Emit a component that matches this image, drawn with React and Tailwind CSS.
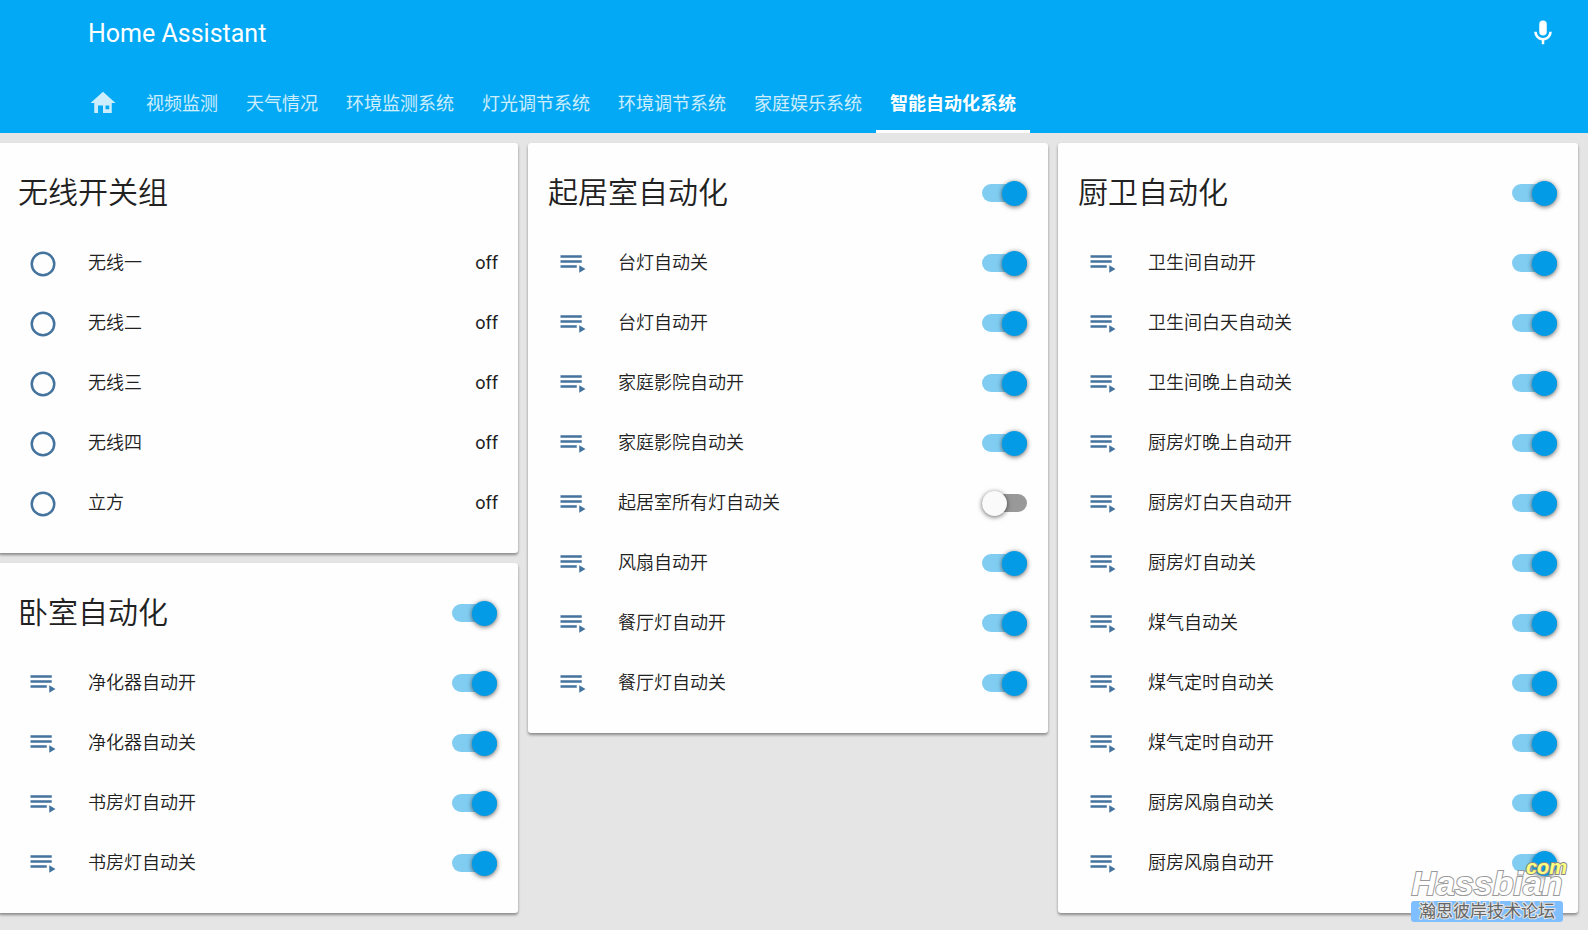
import React, { useState } from 'react';

const tabs = [
  '视频监测',
  '天气情况',
  '环境监测系统',
  '灯光调节系统',
  '环境调节系统',
  '家庭娱乐系统',
  '智能自动化系统',
];

const columns = [
  [
    {
      title: '无线开关组',
      sensors: ['无线一', '无线二', '无线三', '无线四', '立方'],
    },
    {
      title: '卧室自动化',
      automations: ['净化器自动开', '净化器自动关', '书房灯自动开', '书房灯自动关'],
    },
  ],
  [
    {
      title: '起居室自动化',
      automations: [
        '台灯自动关',
        '台灯自动开',
        '家庭影院自动开',
        '家庭影院自动关',
        '起居室所有灯自动关',
        '风扇自动开',
        '餐厅灯自动开',
        '餐厅灯自动关',
      ],
      off: ['起居室所有灯自动关'],
    },
  ],
  [
    {
      title: '厨卫自动化',
      automations: [
        '卫生间自动开',
        '卫生间白天自动关',
        '卫生间晚上自动关',
        '厨房灯晚上自动开',
        '厨房灯白天自动开',
        '厨房灯自动关',
        '煤气自动关',
        '煤气定时自动关',
        '煤气定时自动开',
        '厨房风扇自动关',
        '厨房风扇自动开',
      ],
    },
  ],
];

const Icon = ({ d }) => (
  <svg viewBox="0 0 24 24" className="size-[30px] shrink-0 fill-current" aria-hidden="true">
    <path d={d} />
  </svg>
);

const icons = {
  home: 'M12,3L2,12H5V20H8V14H12V20H19V12H22L12,3M14,14H17V17H14V14Z',
  mic: 'M12,2A3,3 0 0,1 15,5V11A3,3 0 0,1 12,14A3,3 0 0,1 9,11V5A3,3 0 0,1 12,2M19,11C19,14.53 16.39,17.44 13,17.93V21H11V17.93C7.61,17.44 5,14.53 5,11H7A5,5 0 0,0 12,16A5,5 0 0,0 17,11H19Z',
  circle:
    'M12,20A8,8 0 0,1 4,12A8,8 0 0,1 12,4A8,8 0 0,1 20,12A8,8 0 0,1 12,20M12,2A10,10 0 0,0 2,12A10,10 0 0,0 12,22A10,10 0 0,0 22,12A10,10 0 0,0 12,2Z',
  playlist: 'M19,9H2V11H19V9M19,5H2V7H19V5M2,15H15V13H2V15M17,13V19L22,16L17,13Z',
};

const Toggle = ({ id, label, checked, onChange }) => (
  <span className="relative mr-px flex h-[25px] w-[45px] shrink-0 items-center">
    <input
      type="checkbox"
      id={id}
      aria-label={label}
      checked={checked}
      onChange={onChange}
      className="peer h-[18px] w-full cursor-pointer appearance-none rounded-full bg-[#999999] checked:bg-[#81cdf2]"
    />
    <span className="pointer-events-none absolute left-0 top-0 size-[25px] rounded-full bg-[#fafafa] shadow-[0_1px_5px_rgba(0,0,0,0.6)] transition-transform peer-checked:translate-x-5 peer-checked:bg-[#039be5]" />
  </span>
);

const Row = ({ icon, children }) => (
  <li className="flex h-[50px] items-center">
    <span className="flex w-[50px] shrink-0 justify-center pt-0.5 text-[#44739e]">
      <Icon d={icon} />
    </span>
    {children}
  </li>
);

const Card = ({ title, sensors = [], automations = [], off = [] }) => {
  const [states, setStates] = useState(() => automations.map((name) => !off.includes(name)));

  const toggleOne = (index) => {
    setStates(states.map((on, i) => (i === index ? !on : on)));
  };

  const anyOn = states.some(Boolean);

  return (
    <section className="rounded-[3px] bg-[#fefefe] px-5 pb-[25px] pt-[30px] shadow-[0_2px_3px_rgba(0,0,0,0.4)]">
      <div className="mb-[25px] flex h-10 items-center justify-between">
        <h2 className="text-[30px] leading-10">{title}</h2>
        {automations.length > 0 && (
          <Toggle
            label={title}
            checked={anyOn}
            onChange={() => setStates(states.map(() => !anyOn))}
          />
        )}
      </div>
      <ul className="flex flex-col gap-2.5">
        {sensors.map((name) => (
          <Row key={name} icon={icons.circle}>
            <span className="grow pl-5">{name}</span>
            <span className="font-normal">off</span>
          </Row>
        ))}
        {automations.map((name, index) => (
          <Row key={name} icon={icons.playlist}>
            <label htmlFor={`${title}-${index}`} className="grow pl-5">
              {name}
            </label>
            <Toggle
              id={`${title}-${index}`}
              checked={states[index]}
              onChange={() => toggleOne(index)}
            />
          </Row>
        ))}
      </ul>
    </section>
  );
};

const Watermark = () => (
  <div className="pointer-events-none absolute bottom-2 right-[25px] flex w-[152px] flex-col items-center">
    <span className="mb-0.5 font-['Liberation_Sans'] text-[34px] font-bold italic leading-8 text-white [-webkit-text-stroke:2px_#999999] [paint-order:stroke_fill]">
      Hassbian
    </span>
    <span className="absolute -right-1 -top-3 font-['Liberation_Sans'] text-[20px] font-bold italic leading-6 text-[#ffff80] [-webkit-text-stroke:2px_#888888] [paint-order:stroke_fill]">
      com
    </span>
    <span className="w-full whitespace-nowrap rounded-[3px] bg-[#80bfff] text-center text-[17px] font-normal leading-[21px] text-[#666666] [-webkit-text-stroke:2px_#e5e5e5] [paint-order:stroke_fill]">
      瀚思彼岸技术论坛
    </span>
  </div>
);

const App = () => {
  const [active, setActive] = useState('智能自动化系统');

  return (
    <div className="relative min-h-screen overflow-x-hidden bg-[#e5e5e5] font-['Roboto','Noto_Sans_CJK_SC',sans-serif] text-[18px] font-[350] leading-6 text-[#212121]">
      <header className="bg-[#03a9f4] text-white">
        <div className="flex h-[65px] items-center justify-between pl-[88px] pr-[30px]">
          <h1 className="pt-0.5 text-[25px] font-normal">Home Assistant</h1>
          <button type="button" aria-label="Start voice input">
            <Icon d={icons.mic} />
          </button>
        </div>
        <nav className="flex pl-[74px] pt-2 font-normal">
          <button
            type="button"
            aria-label="Home"
            onClick={() => setActive('home')}
            className="flex h-[60px] items-center px-3.5 opacity-80"
          >
            <Icon d={icons.home} />
          </button>
          {tabs.map((tab) => (
            <button
              key={tab}
              type="button"
              onClick={() => setActive(tab)}
              className={`h-[60px] whitespace-nowrap border-b-[3px] px-3.5 pt-1 ${
                tab === active ? 'border-b-white font-bold' : 'border-b-transparent text-white/80'
              }`}
            >
              {tab}
            </button>
          ))}
        </nav>
      </header>
      <main className="-ml-0.5 grid grid-cols-3 items-start gap-2.5 py-2.5 pr-2.5">
        {columns.map((cards, index) => (
          <div key={index} className="flex flex-col gap-2.5">
            {cards.map((card) => (
              <Card key={card.title} {...card} />
            ))}
          </div>
        ))}
      </main>
      <Watermark />
    </div>
  );
};

export default App;
